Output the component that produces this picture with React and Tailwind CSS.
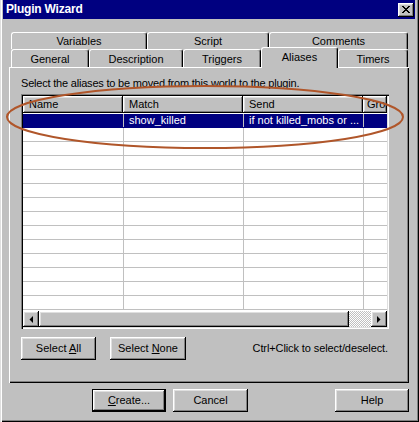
import React from 'react';

const raised =
  'shadow-[inset_-1px_-1px_0_#000,inset_1px_1px_0_#fff,inset_-2px_-2px_0_#808080,inset_2px_2px_0_#dfdfdf]';

function Button({ children, className = '', isDefault = false }) {
  if (isDefault) {
    return (
      <div className={`border border-black bg-[#c0c0c0] ${className}`}>
        <div className={`h-full flex items-center justify-center ${raised}`}>{children}</div>
      </div>
    );
  }
  return (
    <div className={`flex items-center justify-center bg-[#c0c0c0] ${raised} ${className}`}>
      {children}
    </div>
  );
}

function Tab({ label, width, selected = false, height = 'h-[18px]' }) {
  return (
    <div
      className={`${width} ${selected ? 'h-[21px] -mb-[1px] relative z-10 pb-[3px]' : height} shrink-0 flex items-center justify-center bg-[#c0c0c0] rounded-t-[3px] border-t border-l border-t-white border-l-white border-r border-r-black shadow-[inset_-1px_0_0_#808080]`}
    >
      <span className="pt-[1px]">{label}</span>
    </div>
  );
}

function Arrow({ dir }) {
  return (
    <svg width="4" height="7" viewBox="0 0 4 7">
      {dir === 'left' ? <path d="M4 0 L4 7 L0.5 3.5 Z" fill="#000" /> : <path d="M0 0 L0 7 L3.5 3.5 Z" fill="#000" />}
    </svg>
  );
}

const rows = Array.from({ length: 14 }, (_, i) => i);

export default function App() {
  return (
    <div
      className="relative w-[419px] h-[422px] bg-[#c0c0c0] overflow-hidden pl-[3px] pr-[4px] pb-[4px] text-[11px] leading-[13px] text-black shadow-[inset_1px_0_0_#dfdfdf,inset_2px_0_0_#fff,inset_-1px_-1px_0_#000,inset_-2px_-2px_0_#808080]"
      style={{ fontFamily: '"Liberation Sans", Arial, sans-serif' }}
    >
      {/* Title bar */}
      <div className="h-[19px] bg-[#000080] flex items-center justify-between pl-[3px] pr-[1px]">
        <span className="text-white font-bold text-[12px] tracking-[-0.2px]">Plugin Wizard</span>
        <div className={`w-[16px] h-[14px] bg-[#c0c0c0] flex items-center justify-center ${raised}`}>
          <svg width="8" height="7" viewBox="0 0 8 7">
            <path d="M0 0h2v1h1v1h2V1h1V0h2v1H7v1H6v1H5v1h1v1h1v1h1v1H6V6H5V5H3v1H2v1H0V6h1V5h1V4h1V3H2V2H1V1H0z" fill="#000" />
          </svg>
        </div>
      </div>

      {/* Tab control */}
      <div className="ml-[6px] mt-[13px] w-[400px]">
        <div className="flex pl-[2px] h-[17px]">
          <Tab label="Variables" width="w-[136px]" height="h-[17px]" />
          <Tab label="Script" width="w-[122px]" height="h-[17px]" />
          <Tab label="Comments" width="w-[139px]" height="h-[17px]" />
        </div>
        <div className="flex items-end pl-[2px] h-[18px]">
          <Tab label="General" width="w-[78px]" />
          <Tab label="Description" width="w-[94px]" />
          <Tab label="Triggers" width="w-[78px]" />
          <Tab label="Aliases" width="w-[77px]" selected />
          <Tab label="Timers" width="w-[70px]" />
        </div>

        {/* Panel */}
        <div className="w-[400px] h-[316px] bg-[#c0c0c0] border-t border-l border-white shadow-[inset_-1px_-1px_0_#000,inset_-2px_-2px_0_#808080] pt-[9px] pl-[11px]">
          <div className="mb-[4px] tracking-[-0.2px]">Select the aliases to be moved from this world to the plugin.</div>

          {/* List view */}
          <div className="w-[368px] h-[235px] bg-white p-[2px] shadow-[inset_1px_1px_0_#808080,inset_2px_2px_0_#000,inset_-1px_-1px_0_#fff,inset_-2px_-2px_0_#dfdfdf] flex flex-col">
            <div className="flex h-[17px] overflow-hidden shrink-0">
              <div className={`w-[100px] shrink-0 bg-[#c0c0c0] pl-[6px] flex items-center ${raised}`}>Name</div>
              <div className={`w-[120px] shrink-0 bg-[#c0c0c0] pl-[6px] flex items-center ${raised}`}>Match</div>
              <div className={`w-[120px] shrink-0 bg-[#c0c0c0] pl-[6px] flex items-center ${raised}`}>Send</div>
              <div className={`flex-1 bg-[#c0c0c0] pl-[4px] flex items-center ${raised}`}>Gro</div>
            </div>
            <div className="flex-1 overflow-hidden pt-[1px]">
              {rows.map((i) => (
                <div
                  key={i}
                  className={`flex h-[14px] border-b ${i === 0 ? 'bg-[#000080] text-white border-b-[#000080]' : 'border-b-[#c0c0c0]'}`}
                >
                  <div className="w-[101px] shrink-0 border-r border-r-[#c0c0c0]" />
                  <div className="w-[120px] shrink-0 border-r border-r-[#c0c0c0] pl-[5px] leading-[13px]">
                    {i === 0 ? 'show_killed' : ''}
                  </div>
                  <div className="w-[120px] shrink-0 border-r border-r-[#c0c0c0] pl-[5px] leading-[13px]">
                    {i === 0 ? 'if not killed_mobs or ...' : ''}
                  </div>
                  <div className="flex-1" />
                </div>
              ))}
            </div>
            {/* Horizontal scrollbar */}
            <div className="flex h-[16px] shrink-0">
              <div className={`w-[16px] bg-[#c0c0c0] flex items-center justify-center ${raised}`}>
                <Arrow dir="left" />
              </div>
              <div className={`w-[310px] bg-[#c0c0c0] ${raised}`} />
              <div className="w-[22px] bg-[repeating-conic-gradient(#c0c0c0_0_25%,#fff_0_50%)] bg-[length:2px_2px]" />
              <div className={`w-[16px] bg-[#c0c0c0] flex items-center justify-center ${raised}`}>
                <Arrow dir="right" />
              </div>
            </div>
          </div>

          <div className="flex items-center mt-[8px] w-[367px]">
            <Button className="w-[75px] h-[23px]">
              <span>
                Select <u>A</u>ll
              </span>
            </Button>
            <Button className="w-[76px] h-[23px] ml-[14px]">
              <span>
                Select <u>N</u>one
              </span>
            </Button>
            <span className="ml-auto tracking-[-0.1px]">Ctrl+Click to select/deselect.</span>
          </div>
        </div>

        {/* Dialog buttons */}
        <div className="flex mt-[6px] h-[23px]">
          <Button isDefault className="w-[74px] h-[23px] ml-[83px]">
            <span>
              <u>C</u>reate...
            </span>
          </Button>
          <Button className="w-[75px] h-[23px] ml-[7px]">Cancel</Button>
          <Button className="w-[74px] h-[23px] ml-auto">Help</Button>
        </div>
      </div>

      {/* Highlight ring drawn over the dialog */}
      <svg className="absolute left-0 top-0 pointer-events-none" width="419" height="422">
        <ellipse cx="205" cy="117" rx="198" ry="31" fill="none" stroke="#b0562a" strokeWidth="2" />
      </svg>
    </div>
  );
}
